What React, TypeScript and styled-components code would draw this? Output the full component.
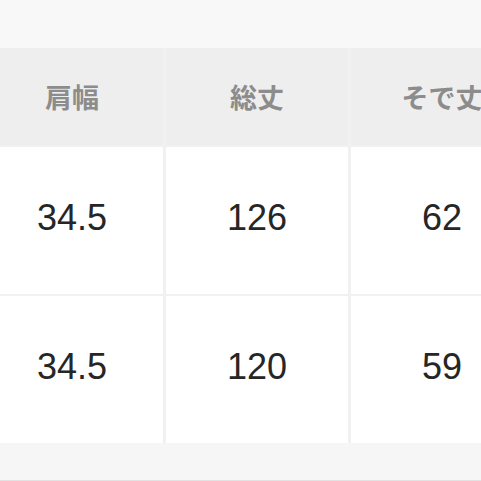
import styled, { createGlobalStyle } from 'styled-components';

const GlobalStyle = createGlobalStyle`
  html, body {
    margin: 0;
    padding: 0;
    background: #f7f7f7;
    overflow: hidden;
  }
`;

const Page = styled.div`
  width: 481px;
  height: 481px;
  overflow: hidden;
  background: #f7f7f7;
  display: flex;
  flex-direction: column;
`;

const TopStrip = styled.div`
  height: 48px;
  flex-shrink: 0;
  background: #f8f8f8;
`;

const Table = styled.div`
  display: grid;
  grid-template-columns: repeat(3, 182px);
  grid-template-rows: 97px 147px 147px;
  column-gap: 3px;
  row-gap: 2px;
  margin-left: -19px;
  width: 552px;
  background: #f1f1f1;
`;

const HeadCell = styled.div`
  background: #eeeeee;
  display: flex;
  align-items: center;
  justify-content: center;
  font-family: 'Noto Sans CJK JP', 'Noto Sans', sans-serif;
  font-size: 27px;
  font-weight: 700;
  color: #8c8c8c;
  white-space: nowrap;
`;

const Cell = styled.div`
  background: #ffffff;
  display: flex;
  align-items: center;
  justify-content: center;
  padding-bottom: 6px;
  box-sizing: border-box;
  font-family: 'Liberation Sans', Arial, sans-serif;
  font-size: 36px;
  color: #262626;
`;

const BottomStrip = styled.div`
  height: 37px;
  flex-shrink: 0;
  background: #f6f6f6;
  border-bottom: 1px solid #e2e2e2;
`;

const heads = ['肩幅', '総丈', 'そで丈'];
const rows = [
  ['34.5', '126', '62'],
  ['34.5', '120', '59'],
];

export default function App() {
  return (
    <>
      <GlobalStyle />
      <Page>
        <TopStrip />
        <Table>
          {heads.map((h) => (
            <HeadCell key={h}>{h}</HeadCell>
          ))}
          {rows.map((r, i) =>
            r.map((v, j) => <Cell key={`${i}-${j}`}>{v}</Cell>)
          )}
        </Table>
        <BottomStrip />
      </Page>
    </>
  );
}
